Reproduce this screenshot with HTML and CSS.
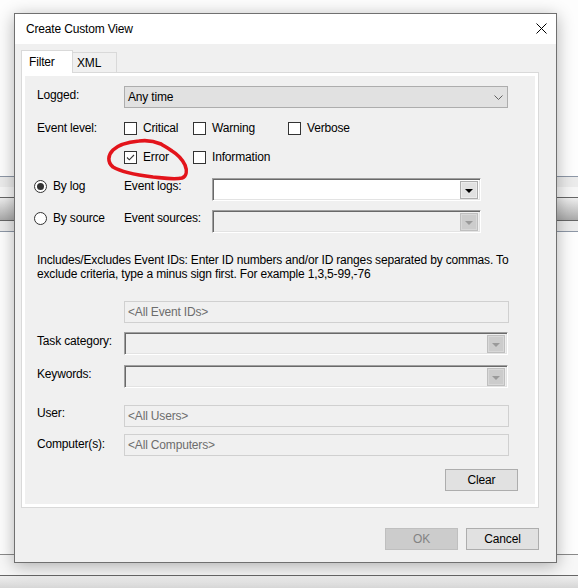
FILE: index.html
```html
<!DOCTYPE html>
<html lang="en">
<head>
<meta charset="utf-8">
<title>Create Custom View</title>
<link rel="stylesheet" href="styles.css">
</head>
<body>
<div class="desk">
  <div class="sp-top"></div>
  <div class="ln-blue"></div>
  <div class="band-a"></div>
  <div class="band-b"></div>
  <div class="ln-dark"></div>
  <div class="grad"></div>
  <div class="ln-dark"></div>
  <div class="band-a"></div>
  <div class="ln-blue"></div>
  <div class="sp-mid"></div>
  <div class="ln-mid"></div>
  <div class="band-w"></div>
  <div class="ln-dark"></div>
  <div class="grad-bottom"></div>
</div>

<div class="dialog">
  <div class="titlebar">
    <span class="title">Create Custom View</span>
    <svg class="close" width="11" height="11" viewBox="0 0 11 11"><path d="M0.5 0.5 L10.5 10.5 M10.5 0.5 L0.5 10.5" stroke="#000" stroke-width="1" fill="none"/></svg>
  </div>
  <div class="dlg-body">
    <div class="tabs">
      <div class="tab active">Filter</div>
      <div class="tab">XML</div>
    </div>
    <div class="panel">
      <div class="page">
        <div class="row r-logged">
          <div class="lbl">Logged:</div>
          <div class="combo-flat">
            <span>Any time</span>
            <svg class="chev" width="9" height="5" viewBox="0 0 9 5"><path d="M0.5 0.5 L4.5 4.5 L8.5 0.5" stroke="#606060" stroke-width="1" fill="none"/></svg>
          </div>
        </div>
        <div class="row r-level1">
          <div class="lbl">Event level:</div>
          <div class="checks">
            <div class="chk"><span class="box"></span>Critical</div>
            <div class="chk"><span class="box"></span>Warning</div>
            <div class="chk"><span class="box"></span>Verbose</div>
          </div>
        </div>
        <div class="row r-level2">
          <div class="lbl"></div>
          <div class="checks">
            <div class="chk"><span class="box"><svg width="11" height="11" viewBox="0 0 11 11"><path d="M2 5.5 L4.3 7.8 L9 3" stroke="#333" stroke-width="1.1" fill="none"/></svg></span>Error</div>
            <div class="chk"><span class="box"></span>Information</div>
          </div>
        </div>
        <div class="row r-bylog">
          <div class="radio-col"><span class="radio on"></span>By log</div>
          <div class="sub-lbl">Event logs:</div>
          <div class="combo3d w-short"><span class="dd"><i class="tri"></i></span></div>
        </div>
        <div class="row r-bysrc">
          <div class="radio-col"><span class="radio"></span>By source</div>
          <div class="sub-lbl">Event sources:</div>
          <div class="combo3d w-short off"><span class="dd"><i class="tri"></i></span></div>
        </div>
        <p class="desc">Includes/Excludes Event IDs: Enter ID numbers and/or ID ranges separated by commas. To<br>exclude criteria, type a minus sign first. For example 1,3,5-99,-76</p>
        <div class="row r-ids">
          <div class="lbl"></div>
          <div class="tbox">&lt;All Event IDs&gt;</div>
        </div>
        <div class="row r-task">
          <div class="lbl">Task category:</div>
          <div class="combo3d w-long off"><span class="dd"><i class="tri"></i></span></div>
        </div>
        <div class="row r-kw">
          <div class="lbl">Keywords:</div>
          <div class="combo3d w-long off"><span class="dd"><i class="tri"></i></span></div>
        </div>
        <div class="row r-user">
          <div class="lbl">User:</div>
          <div class="tbox">&lt;All Users&gt;</div>
        </div>
        <div class="row r-comp">
          <div class="lbl">Computer(s):</div>
          <div class="tbox">&lt;All Computers&gt;</div>
        </div>
        <div class="row r-clear">
          <button class="btn">Clear</button>
        </div>
      </div>
    </div>
    <div class="footer">
      <button class="btn disabled">OK</button>
      <button class="btn">Cancel</button>
    </div>
  </div>
  <svg class="annot" width="90" height="50" viewBox="0 0 90 50"><path d="M61 9 C54 6 46 5 39 6 C29 7 19 9 13 15 C8 20 7 27 13 32 C21 37 37 40 53 42 C63 43 74 45 82 43 C87 41 87 35 85 30 C82 24 77 19 72 16 C68 13 64 11 61 9" stroke="#e3141b" stroke-width="3.6" fill="none" stroke-linecap="round" stroke-linejoin="round"/></svg>
</div>
</body>
</html>
```

FILE: styles.css
```css
* { box-sizing: border-box; }
html, body { margin: 0; padding: 0; }
body {
  width: 578px;
  height: 588px;
  position: relative;
  overflow: hidden;
  background: #ffffff;
  font-family: "Liberation Sans", Arial, sans-serif;
  font-size: 12px;
  letter-spacing: -0.17px;
  color: #000;
}

/* background window */
.desk { display: flex; flex-direction: column; }
.sp-top { height: 176px; background: #fdfdfd; }
.ln-blue { height: 1px; background: #8d97a6; }
.band-a { height: 10px; background: #ebebeb; }
.band-b { height: 10px; background: #f6f6f6; }
.ln-dark { height: 1px; background: #666666; }
.grad { height: 22px; background: linear-gradient(#eeeeee, #a9a9a9); }
.sp-mid { height: 322px; background: #fdfdfd; }
.ln-mid { height: 1px; background: #8a8a8a; }
.band-w { height: 20px; background: #f7f7f7; }
.grad-bottom { height: 12px; background: linear-gradient(#efefef, #d6d6d6); }

/* dialog window */
.dialog {
  position: absolute;
  left: 14px;
  top: 13px;
  width: 543px;
  height: 550px;
  border: 1px solid #707070;
  background: #f0f0f0;
  box-shadow: 0 3px 16px rgba(0, 0, 0, 0.3);
}
.titlebar {
  height: 30px;
  background: #ffffff;
  display: flex;
  align-items: center;
  padding-left: 11px;
}
.title { line-height: 16px; }
.close { margin-left: auto; margin-right: 9px; margin-top: -1px; }

.dlg-body { padding: 6px 17px 0 6px; }

.tabs { display: flex; align-items: flex-start; }
.tab {
  height: 20px;
  margin-top: 2px;
  padding: 0 8px 0 4px;
  border: 1px solid #d9d9d9;
  border-bottom: none;
  border-left: none;
  background: #f0f0f0;
  display: flex;
  align-items: center;
  width: 44px;
}
.tab.active {
  width: 52px;
  height: 23px;
  margin-top: 0;
  margin-bottom: -1px;
  padding-left: 7px;
  border-left: 1px solid #d9d9d9;
  background: #ffffff;
  position: relative;
  z-index: 1;
  padding-bottom: 1px;
}

.panel {
  width: 518px;
  height: 436px;
  border: 1px solid #d9d9d9;
  background: #ffffff;
  padding: 3px;
}
.page {
  height: 100%;
  background: #f0f0f0;
  display: flex;
  flex-direction: column;
  padding-right: 17px;
}

.row { display: flex; align-items: flex-start; line-height: 16px; }
.lbl { width: 99px; padding-left: 12px; flex: none; }
.r-logged { margin-top: 10px; }
.r-logged .lbl { padding-top: 1px; }
.r-level1 { margin-top: 12px; }
.r-level2 { margin-top: 13px; }
.r-bylog { margin-top: 13px; }
.r-bysrc { margin-top: 9px; }
.r-ids { margin-top: 20px; }
.r-task { margin-top: 9px; }
.r-task .lbl { padding-top: 1px; }
.r-kw { margin-top: 10px; }
.r-kw .lbl { padding-top: 1px; }
.r-user { margin-top: 17px; }
.r-comp { margin-top: 7px; }
.r-comp .lbl { padding-top: 2px; }
.r-clear { margin-top: 13px; justify-content: flex-end; }

.combo-flat {
  width: 384px;
  height: 22px;
  border: 1px solid #adadad;
  background: #e1e1e1;
  display: flex;
  align-items: center;
  padding-left: 3px;
}
.combo-flat .chev { margin-left: auto; margin-right: 4px; }

.checks {
  display: grid;
  grid-template-columns: 69px 95px auto;
}
.chk { display: flex; align-items: center; gap: 6px; height: 16px; }
.box {
  width: 13px;
  height: 13px;
  border: 1px solid #333333;
  background: #ffffff;
  flex: none;
  display: block;
}
.box svg { display: block; }

.radio-col {
  width: 99px;
  flex: none;
  padding-left: 9px;
  display: flex;
  align-items: center;
  gap: 6px;
  height: 16px;
  margin-top: 0;
}
.radio {
  width: 13px;
  height: 13px;
  border: 1px solid #333333;
  border-radius: 50%;
  background: #ffffff;
  flex: none;
  display: flex;
  align-items: center;
  justify-content: center;
}
.radio.on::after {
  content: "";
  width: 7px;
  height: 7px;
  border-radius: 50%;
  background: #333333;
}
.sub-lbl { width: 88px; flex: none; padding-top: 0; }

.combo3d {
  height: 23px;
  border: 1px solid;
  border-color: #a0a0a0 #ffffff #ffffff #a0a0a0;
  box-shadow: inset 1px 1px 0 #696969, inset -1px -1px 0 #e3e3e3;
  background: #ffffff;
  display: flex;
  justify-content: flex-end;
  align-items: flex-start;
  padding: 2px 2px 0 0;
}
.combo3d.off { background: #f0f0f0; }
.w-short { width: 269px; }
.w-long { width: 384px; }
.dd {
  width: 18px;
  height: 18px;
  border: 1px solid #adadad;
  background: #e1e1e1;
  box-shadow: inset 0 0 0 1px #ececec;
  display: flex;
  align-items: center;
  justify-content: center;
}
.tri {
  width: 0;
  height: 0;
  border-left: 4px solid transparent;
  border-right: 4px solid transparent;
  border-top: 4px solid #000000;
  margin-top: 2px;
}
.off .dd {
  border: 1px solid #bfbfbf;
  background: #cccccc;
  box-shadow: inset 0 0 0 1px #d8d8d8;
}
.off .tri { border-top-color: #9a9a9a; }

.desc {
  margin: 20px 0 0 0;
  padding-left: 12px;
  line-height: 14px;
  white-space: nowrap;
}

.tbox {
  width: 385px;
  height: 22px;
  border: 1px solid #d0d0d0;
  background: #f0f0f0;
  color: #6d6d6d;
  display: flex;
  align-items: center;
  padding-left: 3px;
}

.btn {
  width: 73px;
  height: 22px;
  border: 1px solid #adadad;
  background: #e1e1e1;
  font-family: "Liberation Sans", Arial, sans-serif;
  font-size: 12px;
  letter-spacing: -0.17px;
  color: #000;
  padding: 0;
  margin: 0;
}
.btn.disabled {
  background: #cccccc;
  border-color: #bfbfbf;
  color: #838383;
}
.footer {
  margin-top: 20px;
  display: flex;
  justify-content: flex-end;
  gap: 8px;
}

.annot {
  position: absolute;
  left: 85px;
  top: 121px;
  pointer-events: none;
}
```
